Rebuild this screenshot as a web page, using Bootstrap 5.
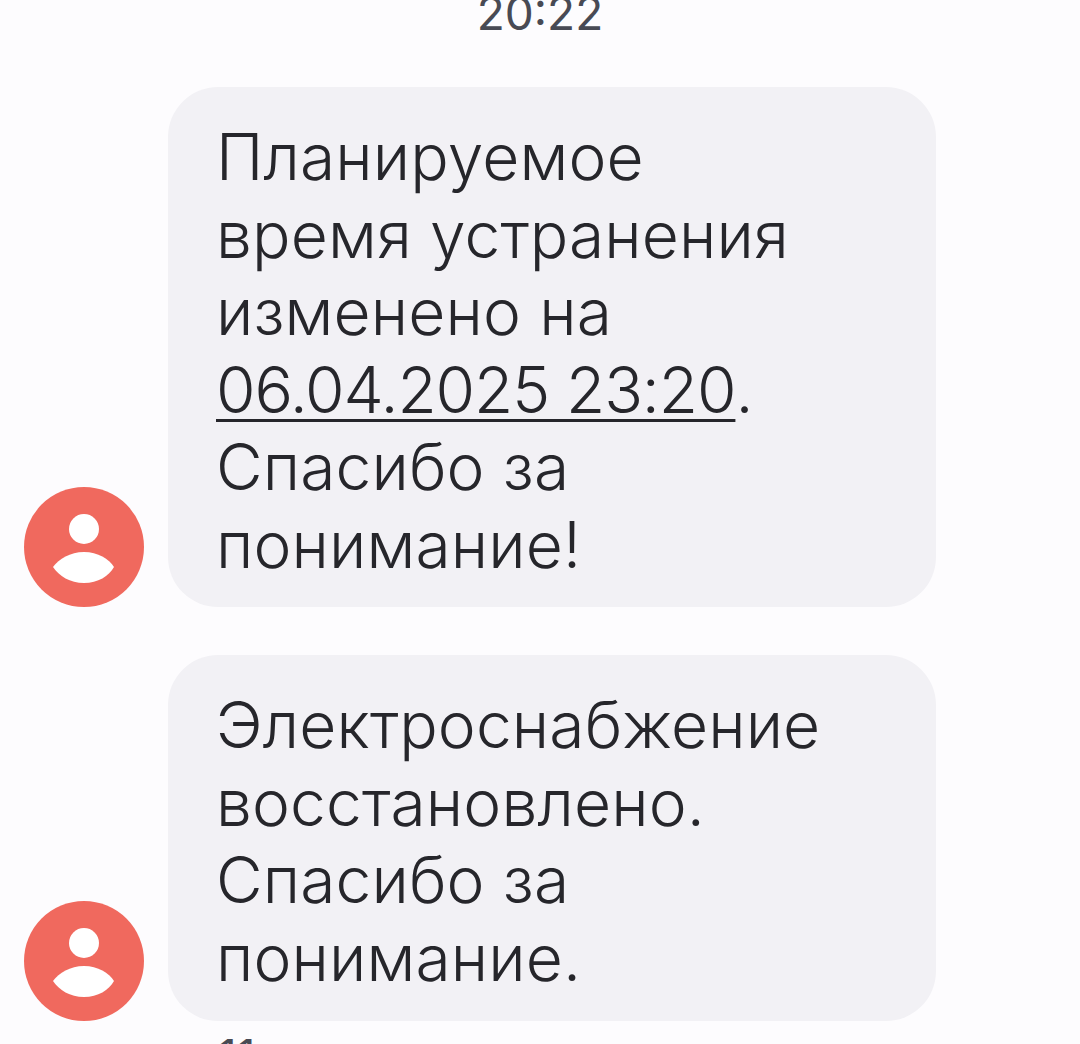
<!DOCTYPE html>
<html lang="ru"><head><meta charset="utf-8">
<link href="https://cdn.jsdelivr.net/npm/bootstrap@5.3.0/dist/css/bootstrap.min.css" rel="stylesheet">
<style>
html,body{height:1044px;overflow:hidden;background:#fdfcfe;}
.sms-page{font-family:"Inter","Noto Sans",sans-serif;color:#26262b;height:1044px;overflow:hidden;}
.sms-time{height:47px;margin-top:-12px;font-size:46px;line-height:50px;color:#484a54;text-align:center;font-weight:400;}
.sms-row{padding-left:24px;gap:24px;}
.sms-avatar{width:120px;height:120px;flex:none;}
.sms-bubble{width:768px;background:#f2f1f5;border-radius:50px;padding:31px 48px 24px 48px;font-size:64px;line-height:77.5px;font-weight:350;letter-spacing:.15px;}
.sms-first{margin-top:52px;}
.sms-second{margin-top:48px;}
.sms-second .sms-bubble{padding-bottom:25px;}
.sms-date{letter-spacing:-1.1px;text-decoration:underline;text-decoration-thickness:3px;text-underline-offset:6px;}
.sms-more{padding-left:218px;font-size:46px;line-height:50px;margin-top:10px;color:#484a54;letter-spacing:0;}
</style></head><body>
<div class="sms-page">
<div class="sms-time">20:22</div>
<div class="d-flex align-items-end sms-row sms-first">
<svg class="sms-avatar" viewBox="0 0 120 120"><circle cx="60" cy="60" r="60" fill="#f0695e"/><circle cx="60" cy="42" r="15" fill="#fff"/><path d="M29 80C35 72 46 65 60 65S85 72 90 80C85 89 74 96 60 96S35 89 29 80Z" fill="#fff"/></svg>
<div class="sms-bubble">Планируемое<br>время устранения<br>изменено на<br><span class="sms-date">06.04.2025 23:20</span>.<br>Спасибо за<br>понимание!</div>
</div>
<div class="d-flex align-items-end sms-row sms-second">
<svg class="sms-avatar" viewBox="0 0 120 120"><circle cx="60" cy="60" r="60" fill="#f0695e"/><circle cx="60" cy="42" r="15" fill="#fff"/><path d="M29 80C35 72 46 65 60 65S85 72 90 80C85 89 74 96 60 96S35 89 29 80Z" fill="#fff"/></svg>
<div class="sms-bubble">Электроснабжение<br>восстановлено.<br>Спасибо за<br>понимание.</div>
</div>
<div class="sms-more">11</div>
</div>
<script src="https://cdn.jsdelivr.net/npm/bootstrap@5.3.0/dist/js/bootstrap.bundle.min.js"></script>
</body></html>
